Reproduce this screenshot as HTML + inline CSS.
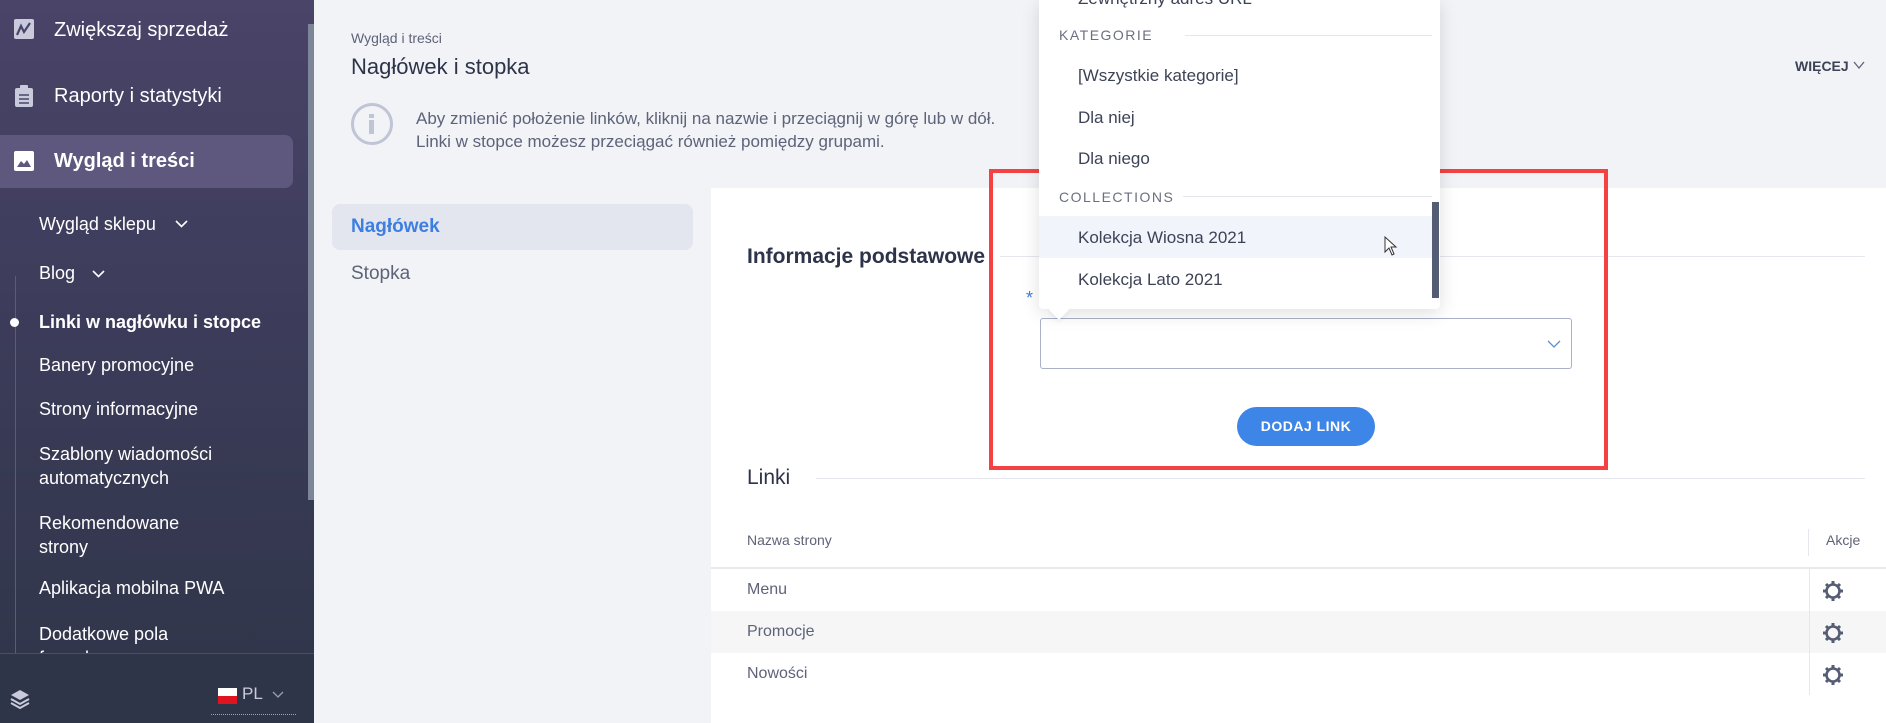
<!DOCTYPE html>
<html><head><meta charset="utf-8"><style>
*{margin:0;padding:0;box-sizing:border-box}
body{width:1886px;height:723px;overflow:hidden;background:#f2f3f7;font-family:"Liberation Sans",sans-serif;position:relative;color:#2d3348}
.a{position:absolute;white-space:nowrap}
#sb{position:absolute;left:0;top:0;width:314px;height:723px;background:linear-gradient(#4a4468,#3c3c5a 45%,#2f3548)}
.sbi{color:#fff;font-size:20px}
.sub{color:#fff;font-size:18px;left:39px}
.dd{color:#3d4357;font-size:17px;left:1078px}
.hd{color:#6b7080;font-size:14px;letter-spacing:1.5px;left:1059px}
.row{color:#5d6378;font-size:16px;left:747px}
</style></head><body>
<div id="sb">
 <div class="a" style="left:308px;top:24px;width:6px;height:476px;background:#7d8599"></div>
 <svg class="a" style="left:14px;top:19px" width="20" height="20"><rect width="20" height="20" rx="2" fill="#c9cbdc"/><path d="M3 16 L7 7 L10 13 L16 4" stroke="#4a4468" stroke-width="2.2" fill="none"/></svg>
 <div class="a sbi" style="left:54px;top:19px">Zwiększaj sprzedaż</div>
 <svg class="a" style="left:15px;top:85px" width="18" height="22"><rect x="0" y="3" width="18" height="19" rx="2" fill="#c9cbdc"/><rect x="5" y="0" width="8" height="5" rx="1" fill="#c9cbdc"/><path d="M4 10h10M4 14h10M4 18h10" stroke="#4a4468" stroke-width="1.6"/></svg>
 <div class="a sbi" style="left:54px;top:85px">Raporty i statystyki</div>
 <div class="a" style="left:0;top:135px;width:293px;height:53px;background:#5e587f;border-radius:0 8px 8px 0"></div>
 <svg class="a" style="left:14px;top:151px" width="20" height="20"><rect width="20" height="20" rx="2" fill="#fff"/><path d="M3 16 L7 10 L10 13 L13 9 L17 16Z" fill="#5e587f"/></svg>
 <div class="a sbi" style="left:54px;top:150px;font-weight:bold">Wygląd i treści</div>
 <div class="a" style="left:15px;top:276px;width:1px;height:377px;background:#5a5d78"></div>
 <div class="a sub" style="top:214px">Wygląd sklepu</div>
 <svg class="a" style="left:175px;top:220px" width="13" height="8"><path d="M1 1 L6.5 6.5 L12 1" stroke="#fff" fill="none" stroke-width="1.6"/></svg>
 <div class="a sub" style="top:263px">Blog</div>
 <svg class="a" style="left:92px;top:270px" width="13" height="8"><path d="M1 1 L6.5 6.5 L12 1" stroke="#fff" fill="none" stroke-width="1.6"/></svg>
 <div class="a" style="left:10px;top:318px;width:9px;height:9px;border-radius:50%;background:#fff"></div>
 <div class="a sub" style="top:312px;font-weight:bold">Linki w nagłówku i stopce</div>
 <div class="a sub" style="top:355px">Banery promocyjne</div>
 <div class="a sub" style="top:399px">Strony informacyjne</div>
 <div class="a sub" style="top:442px;line-height:24px">Szablony wiadomości<br>automatycznych</div>
 <div class="a sub" style="top:511px;line-height:24px">Rekomendowane<br>strony</div>
 <div class="a sub" style="top:578px">Aplikacja mobilna PWA</div>
 <div class="a sub" style="top:622px;line-height:24px;height:31px;overflow:hidden">Dodatkowe pola<br>formularzy</div>
 <div class="a" style="left:0;top:653px;width:314px;height:70px;background:#2f3548;border-top:1px solid #4a5068"></div>
 <svg class="a" style="left:8px;top:688px" width="24" height="24"><path d="M12 2 L21 7 L12 12 L3 7Z" fill="#c9cbdc"/><path d="M3 11 L12 16 L21 11 M3 15 L12 20 L21 15" stroke="#c9cbdc" stroke-width="2" fill="none"/></svg>
 <div class="a" style="left:218px;top:688px;width:19px;height:8px;background:#fff"></div>
 <div class="a" style="left:218px;top:696px;width:19px;height:8px;background:#e0141e"></div>
 <div class="a" style="left:242px;top:684px;color:#c9cbdc;font-size:17px">PL</div>
 <svg class="a" style="left:272px;top:691px" width="12" height="8"><path d="M1 1 L6 6 L11 1" stroke="#9aa0b5" fill="none" stroke-width="1.3"/></svg>
 <div class="a" style="left:211px;top:714px;width:85px;border-top:1px dotted #9aa0b5"></div>
</div>

<div class="a" style="left:351px;top:30px;font-size:14px;color:#5d6378">Wygląd i treści</div>
<div class="a" style="left:351px;top:54px;font-size:22px;color:#2d3348">Nagłówek i stopka</div>
<div class="a" style="left:351px;top:103px;width:42px;height:42px;border-radius:50%;border:3px solid #c0c5d6"></div>
<div class="a" style="left:369px;top:114px;width:5px;height:4px;background:#c0c5d6"></div>
<div class="a" style="left:369px;top:120px;width:5px;height:14px;background:#c0c5d6"></div>
<div class="a" style="left:416px;top:107px;font-size:17px;color:#5d6378;line-height:23px">Aby zmienić położenie linków, kliknij na nazwie i przeciągnij w górę lub w dół.<br>Linki w stopce możesz przeciągać również pomiędzy grupami.</div>
<div class="a" style="left:1795px;top:58px;font-size:14px;font-weight:bold;color:#3d4357">WIĘCEJ</div>
<svg class="a" style="left:1853px;top:61px" width="12" height="9"><path d="M1 1 L6 7 L11 1" stroke="#5d6378" fill="none" stroke-width="1.3"/></svg>

<div class="a" style="left:332px;top:204px;width:361px;height:46px;background:#e4e6ef;border-radius:8px"></div>
<div class="a" style="left:351px;top:216px;font-size:19px;font-weight:bold;color:#3d7fe0">Nagłówek</div>
<div class="a" style="left:351px;top:263px;font-size:19px;color:#5d6378">Stopka</div>

<div class="a" style="left:711px;top:188px;width:1175px;height:535px;background:#fff"></div>
<div class="a" style="left:747px;top:245px;font-size:21px;font-weight:bold;color:#2d3348">Informacje podstawowe</div>
<div class="a" style="left:1000px;top:256px;width:865px;height:1px;background:#e6e7ec"></div>
<div class="a" style="left:1026px;top:288px;color:#3d7fe0;font-size:18px">*</div>
<div class="a" style="left:1040px;top:318px;width:532px;height:51px;border:1px solid #aab0c8;border-radius:3px"></div>
<svg class="a" style="left:1547px;top:340px" width="14" height="9"><path d="M1 1 L7 7 L13 1" stroke="#5c8ed8" fill="none" stroke-width="1.3"/></svg>
<div class="a" style="left:1237px;top:407px;width:138px;height:39px;border-radius:20px;background:#3d85e6;color:#fff;font-weight:bold;font-size:14px;letter-spacing:.5px;text-align:center;line-height:39px">DODAJ LINK</div>
<div class="a" style="left:989px;top:169px;width:619px;height:301px;border:4px solid #f44242"></div>

<div class="a" style="left:747px;top:466px;font-size:21px;color:#2d3348">Linki</div>
<div class="a" style="left:816px;top:478px;width:1049px;height:1px;background:#e6e7ec"></div>
<div class="a" style="left:747px;top:532px;font-size:14px;color:#5d6378">Nazwa strony</div>
<div class="a" style="left:1808px;top:529px;width:1px;height:27px;background:#e6e7ec"></div>
<div class="a" style="left:1826px;top:532px;font-size:14px;color:#5d6378">Akcje</div>
<div class="a" style="left:711px;top:567px;width:1175px;height:2px;background:#e8e9ed"></div>
<div class="a" style="left:711px;top:611px;width:1175px;height:42px;background:#f6f6f6"></div>
<div class="a" style="left:1809px;top:569px;width:1px;height:126px;background:#e6e7ec"></div>
<div class="a row" style="top:581px">Menu</div>
<div class="a row" style="top:623px">Promocje</div>
<div class="a row" style="top:665px">Nowości</div>
<svg width="0" height="0" style="position:absolute"><defs><g id="g"><circle cx="11" cy="11" r="6.5" fill="none" stroke="#555d75" stroke-width="2.6"/><path d="M11 1v4M11 17v4M1 11h4M17 11h4M4 4l3 3M15 15l3 3M4 18l3-3M15 7l3-3" stroke="#555d75" stroke-width="3"/></g></defs></svg>
<svg class="a" style="left:1822px;top:580px" width="22" height="22"><use href="#g"/></svg>
<svg class="a" style="left:1822px;top:622px" width="22" height="22"><use href="#g"/></svg>
<svg class="a" style="left:1822px;top:664px" width="22" height="22"><use href="#g"/></svg>

<div class="a" style="left:1039px;top:0;width:401px;height:309px;background:#fff;border-radius:0 0 4px 4px;box-shadow:0 4px 18px rgba(0,0,0,.13)"></div>
<div class="a" style="left:1052px;top:303px;width:14px;height:14px;background:#fff;transform:rotate(45deg);box-shadow:2px 2px 4px rgba(0,0,0,.05)"></div>
<div class="a dd" style="top:-11px">Zewnętrzny adres URL</div>
<div class="a hd" style="top:27px">KATEGORIE</div>
<div class="a" style="left:1185px;top:35px;width:247px;height:1px;background:#e6e7ec"></div>
<div class="a dd" style="top:66px">[Wszystkie kategorie]</div>
<div class="a dd" style="top:108px">Dla niej</div>
<div class="a dd" style="top:149px">Dla niego</div>
<div class="a hd" style="top:189px">COLLECTIONS</div>
<div class="a" style="left:1183px;top:196px;width:249px;height:1px;background:#e6e7ec"></div>
<div class="a" style="left:1039px;top:216px;width:393px;height:42px;background:#f1f4fb"></div>
<div class="a dd" style="top:228px">Kolekcja Wiosna 2021</div>
<div class="a dd" style="top:270px">Kolekcja Lato 2021</div>
<div class="a" style="left:1432px;top:202px;width:7px;height:96px;background:#555d75"></div>
<svg class="a" style="left:1384px;top:236px" width="14" height="20"><path d="M1 1 L1 16 L5 12 L8 19 L10 18 L7 11 L12 11Z" fill="#fff" stroke="#333" stroke-width="1"/></svg>
</body></html>
